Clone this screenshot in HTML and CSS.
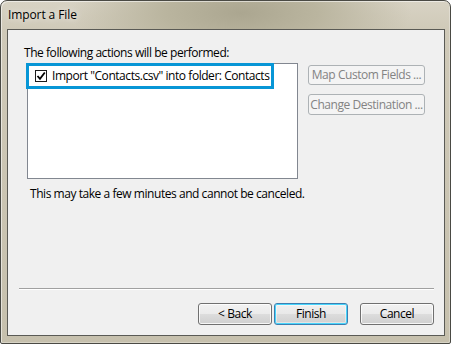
FILE: index.html
```html
<!DOCTYPE html>
<html>
<head>
<meta charset="utf-8">
<link rel="stylesheet" href="styles.css">
</head>
<body>
<div class="window">
  <div class="titlebar"><span class="title">Import a File</span></div>
  <div class="client">
    <div class="content">
      <div class="label">The following actions will be performed:</div>
      <div class="main-row">
        <div class="listbox">
          <div class="item">
            <span class="checkbox"><svg width="10" height="10" viewBox="0 0 10 10"><path d="M1.5 5 L4 7.8 L8.8 1.5" fill="none" stroke="#000" stroke-width="1.8"/></svg></span>
            <span class="item-text">Import "Contacts.csv" into folder: Contacts</span>
          </div>
          <div class="highlight"></div>
        </div>
        <div class="side">
          <button class="btn disabled map">Map Custom Fields ...</button>
          <button class="btn disabled change">Change Destination ...</button>
        </div>
      </div>
      <div class="note">This may take a few minutes and cannot be canceled.</div>
    </div>
    <div class="separator"></div>
    <div class="footer">
      <button class="btn push">&lt; Back</button>
      <button class="btn push default">Finish</button>
      <button class="btn push cancel">Cancel</button>
    </div>
  </div>
</div>
</body>
</html>
```
FILE: styles.css
```css
html, body {
  margin: 0;
  padding: 0;
  background: #ffffff;
}
body {
  font-family: "Open Sans", "Noto Sans", sans-serif;
  font-size: 12px;
  color: #000;
}
.window {
  width: 451px;
  height: 344px;
  box-sizing: border-box;
  border: 1px solid #4a4a44;
  border-radius: 7px 7px 2px 2px;
  background:
    radial-gradient(ellipse 170px 60px at 240px 12px, #aba690 0%, #bab59f 45%, rgba(205,199,182,0) 100%),
    linear-gradient(to bottom, #d8d3c4 0px, #cfc9b8 30px, #c6c0ad 100%);
  display: flex;
  flex-direction: column;
  padding: 0 5px 7px 6px;
  box-shadow: inset 1px 1px 0 rgba(255,255,255,0.55), inset -1px -1px 0 rgba(255,255,255,0.3);
}
.titlebar {
  height: 28px;
  display: flex;
  align-items: center;
  padding-left: 1px;
  padding-bottom: 2px;
  box-sizing: border-box;
}
.title {
  font-size: 12px;
  color: #000;
  letter-spacing: -0.1px;
  text-shadow: 0 0 6px rgba(255,255,255,0.9);
}
.client {
  flex: 1;
  border: 1px solid #5a5a55;
  background: #f0f0f0;
  display: flex;
  flex-direction: column;
}
.content {
  padding: 15px 0 0 16px;
  flex: 1;
}
.label, .note, .item-text, .btn {
  letter-spacing: -0.45px;
}
.label {
  line-height: 16px;
  height: 18px;
}
.main-row {
  display: flex;
  gap: 10px;
  margin-left: 3px;
}
.listbox {
  position: relative;
  width: 271px;
  height: 116px;
  box-sizing: border-box;
  border: 1px solid #828790;
  background: #ffffff;
}
.item {
  display: flex;
  align-items: center;
  gap: 5px;
  padding: 4px 0 0 7px;
  height: 16px;
}
.checkbox {
  width: 12px;
  height: 12px;
  box-sizing: border-box;
  border: 1px solid #1c1c1c;
  background: #fff;
  display: flex;
  align-items: center;
  justify-content: center;
}
.item-text {
  line-height: 16px;
}
.highlight {
  position: absolute;
  left: -2px;
  top: -1px;
  width: 248px;
  height: 26px;
  box-sizing: border-box;
  border: 3px solid #0796d6;
}
.side {
  display: flex;
  flex-direction: column;
  gap: 9px;
  padding-top: 2px;
}
.btn {
  font-family: "Open Sans", "Noto Sans", sans-serif;
  font-size: 12px;
  box-sizing: border-box;
  padding: 0;
  margin: 0;
  border-radius: 3px;
  line-height: 16px;
}
.btn.disabled {
  width: 117px;
  height: 20px;
  border: 1px solid #adb2b5;
  background: #f4f4f4;
  color: #838383;
}
.btn.change {
  height: 21px;
}
.note {
  margin: 7px 0 0 6px;
  line-height: 16px;
}
.separator {
  height: 1px;
  background: #a0a0a0;
  margin: 0 10px 0 11px;
  box-shadow: 0 1px 0 #ffffff;
}
.footer {
  display: flex;
  justify-content: flex-end;
  padding: 14px 10px 10px 0;
  gap: 2px;
}
.btn.push {
  width: 74px;
  height: 22px;
  border: 1px solid #707070;
  color: #000;
  background: linear-gradient(to bottom, #f2f2f2 0%, #ebebeb 50%, #dddddd 51%, #cfcfcf 100%);
  box-shadow: inset 0 0 0 1px rgba(255,255,255,0.8);
}
.btn.push.default {
  border-color: #3c7fb1;
  box-shadow: inset 0 0 0 1px #48d5fc, inset 0 0 0 2px rgba(255,255,255,0.4);
  background: linear-gradient(to bottom, #f0f0f0 0%, #e8e8e8 50%, #dcdcdc 51%, #d0d0d0 100%);
}
.btn.push.cancel {
  margin-left: 10px;
}
```
